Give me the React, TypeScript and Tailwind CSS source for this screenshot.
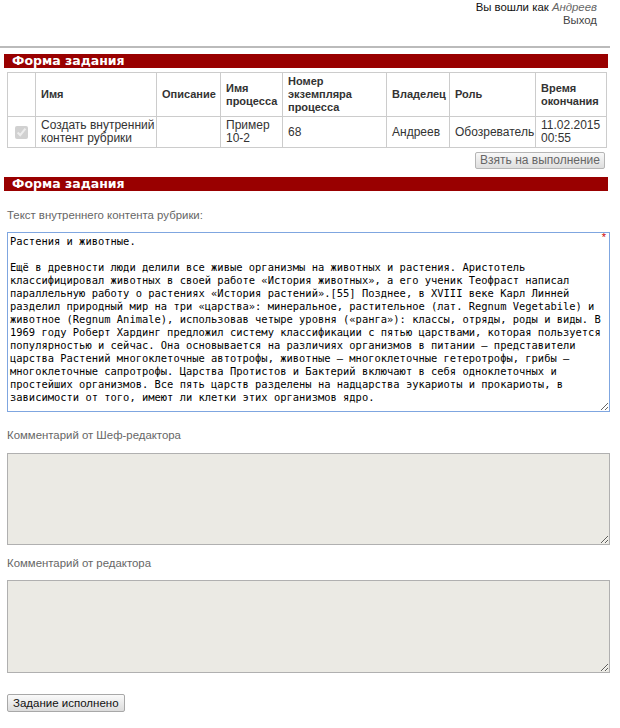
import React from 'react';

const MAIN_TEXT = `Растения и животные.

Ещё в древности люди делили все живые организмы на животных и растения. Аристотель
классифицировал животных в своей работе «История животных», а его ученик Теофраст написал
параллельную работу о растениях «История растений».[55] Позднее, в XVIII веке Карл Линней
разделил природный мир на три «царства»: минеральное, растительное (лат. Regnum Vegetabile) и
животное (Regnum Animale), использовав четыре уровня («ранга»): классы, отряды, роды и виды. В
1969 году Роберт Хардинг предложил систему классификации с пятью царствами, которая пользуется
популярностью и сейчас. Она основывается на различиях организмов в питании — представители
царства Растений многоклеточные автотрофы, животные — многоклеточные гетеротрофы, грибы —
многоклеточные сапротрофы. Царства Протистов и Бактерий включают в себя одноклеточных и
простейших организмов. Все пять царств разделены на надцарства эукариоты и прокариоты, в
зависимости от того, имеют ли клетки этих организмов ядро.`;

const SectionBar = ({ title }: { title: string }) => (
  <div className="ml-[4px] mr-[12px] h-[14px] bg-[#990000] pl-[8px] font-['DejaVu_Sans',Verdana,sans-serif] text-[12.5px] font-bold leading-[14px] text-white">
    {title}
  </div>
);

const th = 'border border-[#cccccc] px-[5px] py-[2px] text-left align-middle text-[11px] font-bold leading-[13px] text-[#333333]';
const td = 'border border-[#cccccc] pl-[5px] pr-[1px] py-[2px] text-left align-middle text-[12px] leading-[13px] text-[#333333]';

const App: React.FC = () => {
  return (
    <div className="min-h-[728px] w-[620px] bg-white font-['Liberation_Sans',Arial,sans-serif] text-[12px] text-[#333333]">
      {/* login */}
      <div className="flex flex-col items-end pr-[23px] pt-[1px] text-[11.4px] leading-[13px] text-[#111111]">
        <div>
          Вы вошли как <i className="text-[#666666]">Андреев</i>
        </div>
        <div className="text-[#444444]">Выход</div>
      </div>

      <div className="mt-[19px] mr-[10px] h-[2px] bg-[#bbbbbb]" />

      <div className="mt-[6px]">
        <SectionBar title="Форма задания" />
      </div>

      <div className="mt-[4px] pl-[7px]">
        <table className="w-[599px] table-fixed border-collapse">
          <colgroup>
            <col className="w-[28px]" />
            <col className="w-[121px]" />
            <col className="w-[64px]" />
            <col className="w-[62px]" />
            <col className="w-[104px]" />
            <col className="w-[63px]" />
            <col className="w-[86px]" />
            <col className="w-[71px]" />
          </colgroup>
          <thead>
            <tr className="h-[44px]">
              <th className={th}></th>
              <th className={th}>Имя</th>
              <th className={th}>Описание</th>
              <th className={th}>Имя процесса</th>
              <th className={th}>Номер экземпляра процесса</th>
              <th className={th}>Владелец</th>
              <th className={th}>Роль</th>
              <th className={th}>Время окончания</th>
            </tr>
          </thead>
          <tbody>
            <tr className="h-[31px]">
              <td className="border border-[#cccccc] text-center align-middle">
                <input type="checkbox" checked disabled readOnly className="h-[13px] w-[13px] align-middle" />
              </td>
              <td className={td}>Создать внутренний контент рубрики</td>
              <td className={td}></td>
              <td className={td}>Пример 10-2</td>
              <td className={td}>68</td>
              <td className={td}>Андреев</td>
              <td className={td}>Обозреватель</td>
              <td className={td}>11.02.2015 00:55</td>
            </tr>
          </tbody>
        </table>
      </div>

      <div className="mt-[4px] flex justify-end pr-[15px]">
        <button className="h-[17px] rounded-[2px] border border-[#b5b5b5] bg-gradient-to-b from-[#f8f8f8] to-[#dedede] px-[4px] text-[12px] leading-[15px] text-[#666666]">
          Взять на выполнение
        </button>
      </div>

      <div className="mt-[8px]">
        <SectionBar title="Форма задания" />
      </div>

      <div className="pl-[7px] pr-[10px]">
        <div className="mt-[17px] text-[11.4px] leading-[14px] text-[#666666]">Текст внутреннего контента рубрики:</div>

        <div className="relative mt-[10px]">
          <textarea
            readOnly
            wrap="off"
            defaultValue={MAIN_TEXT}
            className="block h-[180px] w-full resize-y overflow-hidden border border-[#7fa6e0] bg-white px-[2px] pt-[2px] font-['DejaVu_Sans_Mono','Liberation_Mono',monospace] text-[10.45px] leading-[13px] text-[#000000] outline-none"
          />
          <span className="absolute right-[4px] top-[0px] text-[11px] leading-[11px] text-[#cc0000]">*</span>
        </div>

        <div className="mt-[16px] text-[11.4px] leading-[14px] text-[#666666]">Комментарий от Шеф-редактора</div>
        <textarea
          readOnly
          className="mt-[11px] block h-[92px] w-full resize-y border border-[#b0b0b0] bg-[#ebeae4] outline-none"
        />

        <div className="mt-[11px] text-[11.4px] leading-[14px] text-[#666666]">Комментарий от редактора</div>
        <textarea
          readOnly
          className="mt-[10px] block h-[93px] w-full resize-y border border-[#b0b0b0] bg-[#ebeae4] outline-none"
        />

        <button className="mt-[21px] h-[18px] rounded-[2px] border border-[#a8a8a8] bg-gradient-to-b from-[#fafafa] to-[#dcdcdc] px-[5px] text-[11.5px] leading-[15px] text-[#111111]">
          Задание исполнено
        </button>
      </div>
    </div>
  );
};

export default App;
